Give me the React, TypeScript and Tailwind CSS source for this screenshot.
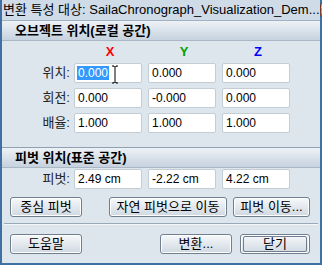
import React from 'react';

const font = { fontFamily: '"Liberation Sans", "Noto Sans CJK KR", sans-serif' };

function Field({ value, selected }: { value: string; selected?: boolean }) {
  return (
    <div className="flex h-[20px] w-[68px] items-center rounded-[2px] border border-[#c4ccd4] bg-white pl-[2px] text-[12px] text-black">
      {selected ? <span className="bg-[#3399ff] px-[1px] leading-[14px] text-white">{value}</span> : <span className="px-[1px]">{value}</span>}
    </div>
  );
}

function Row({ label, values, first }: { label: string; values: string[]; first?: boolean }) {
  return (
    <div className="flex items-center">
      <div className="w-[72px] pr-[4px] text-right text-[13px] text-[#222]">{label}</div>
      <div className="flex gap-[6px]">
        {values.map((v, i) => (
          <Field key={i} value={v} selected={first && i === 0} />
        ))}
      </div>
    </div>
  );
}

function Btn({ label, w, isDefault }: { label: string; w: string; isDefault?: boolean }) {
  return (
    <div
      className={`flex h-[20px] ${w} items-center justify-center rounded-[3px] border border-[#6f7f8f] bg-gradient-to-b from-[#f7f9fb] to-[#cfd8e1] text-[13px] text-black shadow-[inset_0_0_0_1px_#ffffff]`}
    >
      {isDefault ? (
        <div className="flex h-[16px] w-[calc(100%-4px)] items-center justify-center rounded-[2px] border border-[#6f7f8f]">{label}</div>
      ) : (
        label
      )}
    </div>
  );
}

function Header({ text }: { text: string }) {
  return (
    <div className="flex h-[19px] items-center bg-gradient-to-b from-[#eef2f6] to-[#c6d2de] pl-[13px] text-[13px] font-bold text-black">
      {text}
    </div>
  );
}

export default function App() {
  return (
    <div className="h-[265px] w-[322px] overflow-hidden bg-white" style={font}>
      <div className="flex h-[265px] w-[322px] flex-col border-x-2 border-b-2 border-[#3f6fa3] bg-[#dde5ed]">
        <div className="flex h-[20px] items-center justify-between bg-[#cfdbe7] pl-[1px] pr-[3px]">
          <span className="whitespace-nowrap text-[13px] text-black">변환 특성 대상: SailaChronograph_Visualization_Dem...</span>
          <div className="flex h-[14px] w-[14px] items-center justify-center rounded-[2px] border border-[#7a3a2a] bg-gradient-to-b from-[#e8a08a] to-[#c45a40]">
            <svg width="8" height="8" viewBox="0 0 8 8">
              <path d="M1 1 L7 7 M7 1 L1 7" stroke="#fff" strokeWidth="2" />
            </svg>
          </div>
        </div>
        <div className="h-px bg-[#9fb1c3]" />
        <Header text="오브젝트 위치(로컬 공간)" />
        <div className="h-px bg-[#aab8c6]" />
        <div className="relative flex flex-col gap-[5px] pt-[4px]">
          <div className="flex h-[13px] items-center pl-[71px] text-[13px] font-bold">
            <div className="w-[74px] text-center text-[#ff0000]">X</div>
            <div className="w-[74px] text-center text-[#00a000]">Y</div>
            <div className="w-[74px] text-center text-[#0000ff]">Z</div>
          </div>
          <div className="flex flex-col gap-[5px]">
            <Row label="위치:" values={['0.000', '0.000', '0.000']} first />
            <Row label="회전:" values={['0.000', '-0.000', '0.000']} />
            <Row label="배율:" values={['1.000', '1.000', '1.000']} />
          </div>
          <svg className="absolute left-[109px] top-[24px]" width="8" height="19" viewBox="0 0 8 19">
            <path d="M1 1 H3 M5 1 H7 M4 1 V18 M1 18 H3 M5 18 H7 M3 1 V2 M5 1 V2 M3 17 V18 M5 17 V18" stroke="#000" strokeWidth="1" fill="none" />
          </svg>
        </div>
        <div className="mt-[14px] h-px bg-[#8fa0b2]" />
        <Header text="피벗 위치(표준 공간)" />
        <div className="h-px bg-[#aab8c6]" />
        <div className="mt-[1px]">
          <Row label="피벗:" values={['2.49 cm', '-2.22 cm', '4.22 cm']} />
        </div>
        <div className="mt-[8px] flex px-[8px]">
          <Btn label="중심 피벗" w="w-[72px]" />
          <div className="ml-[27px]">
            <Btn label="자연 피벗으로 이동" w="w-[118px]" />
          </div>
          <div className="ml-[6px]">
            <Btn label="피벗 이동..." w="w-[77px]" />
          </div>
        </div>
        <div className="mx-[2px] mt-[6px] h-px bg-[#9aa9b8] shadow-[0_1px_0_#f4f7fa]" />
        <div className="mt-[10px] flex px-[8px]">
          <Btn label="도움말" w="w-[72px]" />
          <div className="ml-[78px]">
            <Btn label="변환..." w="w-[72px]" />
          </div>
          <div className="ml-[8px]">
            <Btn label="닫기" w="w-[70px]" isDefault />
          </div>
        </div>
      </div>
    </div>
  );
}
